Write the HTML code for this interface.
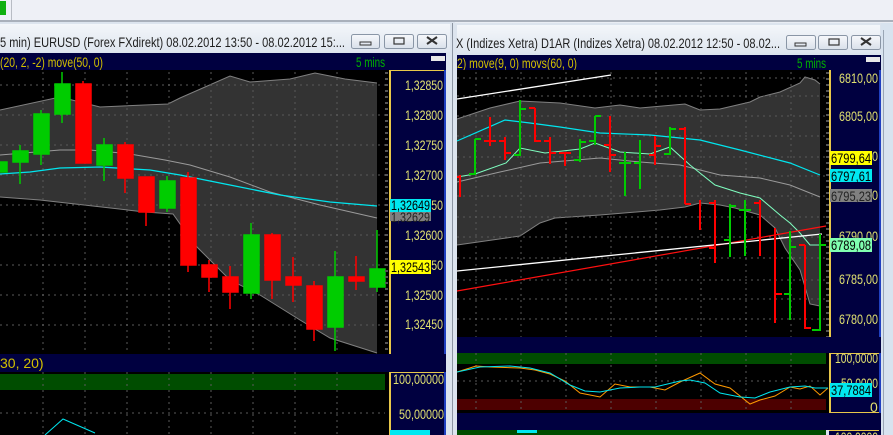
<!DOCTYPE html>
<html><head><meta charset="utf-8"><style>
html,body{margin:0;padding:0;width:893px;height:435px;overflow:hidden;background:#e9edf4}
svg{display:block}
text{font-family:"Liberation Sans",sans-serif}
</style></head><body>
<svg width="893" height="435" viewBox="0 0 893 435" xmlns="http://www.w3.org/2000/svg">
<defs>
<linearGradient id="tb" x1="0" y1="0" x2="0" y2="1"><stop offset="0" stop-color="#f3f6fa"/><stop offset="1" stop-color="#dfe6ef"/></linearGradient>
<linearGradient id="bt" x1="0" y1="0" x2="0" y2="1"><stop offset="0" stop-color="#f6f8fb"/><stop offset="1" stop-color="#d9e0ea"/></linearGradient>
<pattern id="dv" width="1" height="6" patternUnits="userSpaceOnUse"><rect width="1" height="2" fill="#555"/></pattern>
</defs>
<rect x="0" y="0" width="893" height="21" fill="#eef0f6"/>
<rect x="0" y="1" width="6" height="14" fill="#10b010"/>
<rect x="11" y="0" width="1" height="20" fill="#b8bcc4"/>
<rect x="0" y="20" width="893" height="2" fill="#a9b0bb"/>

<rect x="0" y="22" width="455" height="413" fill="#dce4ee"/>
<rect x="0" y="24" width="450" height="28" fill="url(#tb)"/>
<text x="0" y="47" font-size="14" fill="#1e1e1e" textLength="345" lengthAdjust="spacingAndGlyphs">5 min)  EURUSD (Forex FXdirekt) 08.02.2012 13:50 - 08.02.2012 15:...</text>
<g stroke="#8a96a6" fill="url(#bt)"><rect x="351.5" y="34.5" width="28" height="14" rx="2"/><rect x="384.5" y="34.5" width="29" height="14" rx="2"/><rect x="417.5" y="34.5" width="29" height="14" rx="2"/></g>
<rect x="360" y="42" width="11" height="3" fill="none" stroke="#333" stroke-width="1"/>
<rect x="394" y="38" width="10" height="6" fill="none" stroke="#333" stroke-width="1.2"/>
<path d="M427 37l10 7M437 37l-10 7" stroke="#333" stroke-width="2"/>
<rect x="0" y="53" width="446" height="17" fill="#000040"/>
<text x="0" y="67" font-size="14" fill="#d2c000" textLength="103" lengthAdjust="spacingAndGlyphs">(20, 2, -2) move(50, 0)</text>
<text x="356" y="67" font-size="13.5" fill="#00b000" textLength="29" lengthAdjust="spacingAndGlyphs">5 mins</text>
<rect x="431" y="56" width="14" height="5" fill="#e8e8e8"/>
<rect x="0" y="70" width="389" height="284" fill="#000"/>
<polygon fill="#333" points="0,110 60,97 100,107 168,104 180,98 230,76 250,82 290,79 315,73 345,79 377,83 377,353 330,338 300,320 260,295 230,280 195,245 173,214 145,212 40,200 0,197"/>
<polyline fill="none" stroke="#808080" points="0,110 60,97 100,107 168,104 180,98 230,76 250,82 290,79 315,73 345,79 377,83"/>
<polyline fill="none" stroke="#808080" points="0,197 40,200 145,212 173,214 195,245 230,280 260,295 300,320 330,338 377,353"/>
<g stroke="#5a5a5a" stroke-dasharray="2 4">
<path d="M43 72V354M85 72V354M127 72V354M169 72V354M211 72V354M253 72V354M295 72V354M337 72V354"/>
<path d="M0 85H385M0 115H385M0 145H385M0 175H385M0 205H385M0 235H385M0 265H385M0 295H385M0 325H385"/>
</g>
<polyline fill="none" stroke="#9a9a9a" points="0,155 60,150 90,150 130,154 165,160 190,165 230,177 270,192 320,205 377,218"/>
<polyline fill="none" stroke="#00e5ee" stroke-width="1.3" points="0,174 30,172 60,168 100,167 150,170 180,175 230,185 280,195 330,202 377,206"/>
<g stroke-width="1.5">
<g stroke="#00cc00" fill="#00cc00">
<path d="M20 145V184M41 110V165M62 72V123M104 138V181M167 176V212M251 223V299M335 251V351M377 230V292"/>
<rect x="0" y="162" width="7" height="10"/><rect x="13" y="151" width="15" height="11"/><rect x="34" y="114" width="15" height="40"/><rect x="55" y="84" width="15" height="30"/><rect x="97" y="145" width="15" height="20"/><rect x="160" y="181" width="15" height="27"/><rect x="244" y="235" width="15" height="58"/><rect x="328" y="277" width="15" height="50"/><rect x="370" y="269" width="15" height="18"/>
</g>
<g stroke="#ff0000" fill="#ff0000">
<path d="M83 81V163M125 142V193M146 177V226M188 172V272M209 260V292M230 266V309M272 233V299M293 257V302M314 281V341M356 256V290"/>
<rect x="76" y="84" width="15" height="79"/><rect x="118" y="145" width="15" height="33"/><rect x="139" y="177" width="15" height="35"/><rect x="181" y="178" width="15" height="87"/><rect x="202" y="265" width="15" height="12"/><rect x="223" y="277" width="15" height="15"/><rect x="265" y="235" width="15" height="45"/><rect x="286" y="277" width="15" height="8"/><rect x="307" y="286" width="15" height="43"/><rect x="349" y="277" width="15" height="4"/>
</g></g>
<rect x="389" y="70" width="57" height="284" fill="#000040"/>
<rect x="389" y="70" width="55" height="1" fill="#e8c84a"/>
<rect x="389" y="70" width="2" height="284" fill="#e8c84a"/>
<rect x="444" y="70" width="2" height="284" fill="#2040c0"/>
<rect x="385" y="70" width="3" height="284" fill="url(#dv)"/>
<g font-size="14" fill="#e0e070">
<text x="405" y="90" textLength="38" lengthAdjust="spacingAndGlyphs">1,32850</text><text x="405" y="120" textLength="38" lengthAdjust="spacingAndGlyphs">1,32800</text><text x="405" y="150" textLength="38" lengthAdjust="spacingAndGlyphs">1,32750</text><text x="405" y="180" textLength="38" lengthAdjust="spacingAndGlyphs">1,32700</text><text x="405" y="210" textLength="38" lengthAdjust="spacingAndGlyphs">1,32650</text><text x="405" y="240" textLength="38" lengthAdjust="spacingAndGlyphs">1,32600</text><text x="405" y="270" textLength="38" lengthAdjust="spacingAndGlyphs">1,32550</text><text x="405" y="300" textLength="38" lengthAdjust="spacingAndGlyphs">1,32500</text><text x="405" y="329" textLength="38" lengthAdjust="spacingAndGlyphs">1,32450</text>
</g>
<rect x="390" y="199" width="41" height="13" fill="#00e8f0"/><text x="391" y="210" font-size="14" fill="#000" textLength="39" lengthAdjust="spacingAndGlyphs">1,32649</text>
<rect x="390" y="212" width="41" height="9" fill="#808080"/><text x="391" y="222" font-size="14" fill="#222" textLength="39" lengthAdjust="spacingAndGlyphs">1,32629</text>
<rect x="390" y="260" width="41" height="14" fill="#ffff00"/><text x="391" y="272" font-size="14" fill="#000" textLength="39" lengthAdjust="spacingAndGlyphs">1,32543</text>
<rect x="0" y="354" width="446" height="18" fill="#000040"/>
<text x="0" y="368" font-size="14" fill="#d2c000">30, 20)</text>
<rect x="0" y="372" width="389" height="63" fill="#000"/>
<rect x="0" y="374" width="385" height="16" fill="#004d00"/>
<g stroke="#5a5a5a" stroke-dasharray="2 4"><path d="M43 372V435M85 372V435M127 372V435M169 372V435M211 372V435M253 372V435M295 372V435M337 372V435M0 413H385"/></g>
<polyline fill="none" stroke="#00e5ee" points="45,435 63,419 95,433"/>
<rect x="389" y="372" width="57" height="63" fill="#000040"/>
<rect x="389" y="372" width="2" height="63" fill="#e8c84a"/><rect x="389" y="372" width="55" height="1" fill="#e8c84a"/>
<rect x="444" y="372" width="2" height="63" fill="#2040c0"/>
<g font-size="14" fill="#e0e070"><text x="393" y="384" textLength="51" lengthAdjust="spacingAndGlyphs">100,00000</text><text x="399" y="419" textLength="45" lengthAdjust="spacingAndGlyphs">50,00000</text></g>
<rect x="390" y="430" width="40" height="5" fill="#00e8f0"/>

<rect x="451" y="23" width="442" height="412" fill="#dce4ee" rx="4"/>
<rect x="452" y="23" width="1" height="412" fill="#8d96a3"/>
<rect x="457" y="25" width="423" height="28" fill="url(#tb)"/>
<text x="456" y="48" font-size="14" fill="#1e1e1e" textLength="324" lengthAdjust="spacingAndGlyphs">X (Indizes Xetra) D1AR (Indizes Xetra) 08.02.2012 12:50 - 08.02...</text>
<g stroke="#8a96a6" fill="url(#bt)"><rect x="786.5" y="35.5" width="29" height="14" rx="2"/><rect x="818.5" y="35.5" width="29" height="14" rx="2"/><rect x="851.5" y="35.5" width="29" height="14" rx="2"/></g>
<rect x="795" y="43" width="11" height="3" fill="none" stroke="#333"/>
<rect x="829" y="39" width="10" height="6" fill="none" stroke="#333" stroke-width="1.2"/>
<path d="M861 38l10 7M871 38l-10 7" stroke="#333" stroke-width="2"/>
<rect x="457" y="55" width="424" height="15" fill="#000040"/>
<text x="457" y="68" font-size="14" fill="#d2c000" textLength="120" lengthAdjust="spacingAndGlyphs">2) move(9, 0) movs(60, 0)</text>
<text x="797" y="68" font-size="13.5" fill="#00b000" textLength="29" lengthAdjust="spacingAndGlyphs">5 mins</text>
<rect x="866" y="57" width="14" height="5" fill="#e8e8e8"/>
<rect x="457" y="70" width="373" height="267" fill="#000"/>
<polygon fill="#333" points="457,119 490,108 520,101 560,103 595,108 620,105 640,108 685,104 700,110 720,109 750,102 760,97 780,92 800,83 805,77 815,80 820,84 820,306 810,304 800,270 785,248 775,228 760,215 735,208 720,205 700,203 685,207 660,210 600,215 555,218 540,223 520,236 457,245"/>
<polyline fill="none" stroke="#808080" points="457,119 490,108 520,101 560,103 595,108 620,105 640,108 685,104 700,110 720,109 750,102 760,97 780,92 800,83 805,77 815,80 820,84"/>
<polyline fill="none" stroke="#808080" points="457,245 520,236 540,223 555,218 600,215 660,210 685,207 700,203 720,205 735,208 760,215 775,228 785,248 800,270 810,304 820,306"/>
<g stroke="#5a5a5a" stroke-dasharray="2 4">
<path d="M476 72V337M521 72V337M566 72V337M611 72V337M656 72V337M701 72V337M746 72V337M791 72V337"/>
<path d="M457 78H826M457 96H826M457 116H826M457 136H826M457 157H826M457 176H826M457 196H826M457 217H826M457 237H826M457 258H826M457 280H826M457 299H826M457 319H826"/>
</g>
<polyline fill="none" stroke="#9a9a9a" points="457,182 500,172 540,163 600,158 640,162 680,165 720,175 760,178 790,185 820,197"/>
<polyline fill="none" stroke="#00e5ee" stroke-width="1.2" points="457,141 505,120 530,123 560,127 600,133 650,135 700,140 740,150 790,163 820,175"/>
<polyline fill="none" stroke="#7fffc0" points="457,177 475,174 506,163 520,148 545,153 580,149 595,143 620,152 650,154 670,147 690,165 715,185 740,193 760,198 780,215 790,223 800,233 810,245 820,245"/>
<polyline fill="none" stroke="#fff" stroke-width="1.3" points="457,99 611,75"/>
<polyline fill="none" stroke="#ff1010" stroke-width="1.2" points="457,291 826,226"/>
<polyline fill="none" stroke="#fff" stroke-width="1.3" points="457,271 822,234"/>
<g stroke-width="2" fill="none">
<path stroke="#ff0000" d="M460 175V197M457 177H460M490 117V146M484 141H490M490 141H496M505 137V160M499 141H505M505 153H511M535 108V142M529 108H535M535 141H541M550 137V164M544 141H550M550 153H556M565 153V166M559 153H565M565 153H571M610 116V172M604 145H610M610 155H616M655 136V165M649 155H655M655 146H661M685 127V204M679 129H685M685 204H691M700 200V230M715 200V263M709 203H715M709 248H715M760 200V256M754 203H760M775 228V323M775 294H782M805 245V329M799 245H805M805 328H811"/>
<path stroke="#00cc00" d="M475 139V175M469 174H475M475 139H481M520 100V156M514 155H520M520 109H526M580 139V162M580 142H586M574 160H580M595 116V145M595 116H601M589 141H595M625 152V196M619 163H625M625 163H631M640 140V189M634 163H640M670 127V155M664 154H670M670 129H676M730 204V257M724 240H730M730 206H736M745 200V256M739 210H745M745 210H751M790 231V320M784 294H790M790 247H796M820 234V331M812 330H820M820 245H826"/>
</g>
<rect x="826" y="70" width="3" height="267" fill="url(#dv)"/>
<rect x="829" y="70" width="52" height="268" fill="#000040"/>
<rect x="829" y="70" width="2" height="268" fill="#e8c84a"/>
<rect x="829" y="337" width="50" height="1" fill="#e8c84a"/>
<rect x="879" y="70" width="2" height="268" fill="#2040c0"/>
<g font-size="14" fill="#e0e070">
<text x="839" y="83" textLength="39" lengthAdjust="spacingAndGlyphs">6810,00</text><text x="839" y="121" textLength="39" lengthAdjust="spacingAndGlyphs">6805,00</text><text x="839" y="161" textLength="39" lengthAdjust="spacingAndGlyphs">6800,00</text><text x="839" y="200" textLength="39" lengthAdjust="spacingAndGlyphs">6795,00</text><text x="839" y="241" textLength="39" lengthAdjust="spacingAndGlyphs">6790,00</text><text x="839" y="284" textLength="39" lengthAdjust="spacingAndGlyphs">6785,00</text><text x="839" y="324" textLength="39" lengthAdjust="spacingAndGlyphs">6780,00</text>
</g>
<rect x="830" y="151" width="42" height="14" fill="#ffff00"/><text x="831" y="163" font-size="14" fill="#000" textLength="40" lengthAdjust="spacingAndGlyphs">6799,64</text>
<rect x="830" y="169" width="42" height="13" fill="#00e8f0"/><text x="831" y="181" font-size="14" fill="#000" textLength="40" lengthAdjust="spacingAndGlyphs">6797,61</text>
<rect x="830" y="189" width="42" height="13" fill="#808080"/><text x="831" y="201" font-size="14" fill="#222" textLength="40" lengthAdjust="spacingAndGlyphs">6795,23</text>
<rect x="830" y="238" width="42" height="14" fill="#80ffb0"/><text x="831" y="250" font-size="14" fill="#000" textLength="40" lengthAdjust="spacingAndGlyphs">6789,08</text>
<rect x="457" y="337" width="424" height="16" fill="#000040"/>
<rect x="457" y="353" width="372" height="60" fill="#000"/>
<rect x="457" y="353" width="369" height="11" fill="#004d00"/>
<rect x="457" y="399" width="369" height="11" fill="#4d0000"/>
<g stroke="#5a5a5a" stroke-dasharray="2 4"><path d="M476 353V413M521 353V413M566 353V413M611 353V413M656 353V413M701 353V413M746 353V413M791 353V413M457 381H826"/></g>
<polyline fill="none" stroke="#ff9900" points="457,372 476,366 490,367 520,368 535,370 550,374 565,381 580,393 600,397 615,384 630,387 650,387 665,390 680,382 700,373 715,384 730,388 750,404 760,400 775,396 790,387 800,389 810,386 820,395 828,388"/>
<polyline fill="none" stroke="#00e5ee" points="457,372 480,367 510,366 530,368 550,373 570,385 585,391 600,392 620,388 640,387 655,387 680,381 690,380 705,383 720,393 740,397 755,398 770,392 790,387 805,386 815,388 828,388"/>
<rect x="829" y="353" width="52" height="60" fill="#000040"/>
<rect x="829" y="353" width="2" height="60" fill="#e8c84a"/><rect x="829" y="353" width="50" height="1" fill="#e8c84a"/><rect x="829" y="412" width="50" height="1" fill="#e8c84a"/>
<rect x="879" y="353" width="2" height="60" fill="#2040c0"/>
<g font-size="14" fill="#e0e070"><text x="835" y="363" textLength="43" lengthAdjust="spacingAndGlyphs">100,0000</text><text x="841" y="388" textLength="37" lengthAdjust="spacingAndGlyphs">50,0000</text><text x="870" y="412">0</text></g>
<rect x="830" y="383" width="42" height="14" fill="#00e8f0"/><text x="831" y="395" font-size="14" fill="#000" textLength="40" lengthAdjust="spacingAndGlyphs">37,7884</text>
<rect x="457" y="413" width="424" height="17" fill="#000040"/>
<rect x="457" y="430" width="369" height="5" fill="#004d00"/>
<rect x="517" y="430" width="20" height="3" fill="#00e8f0"/>
<rect x="829" y="430" width="52" height="5" fill="#000040"/>
<rect x="829" y="430" width="50" height="1" fill="#e8c84a"/>
<text x="835" y="442" font-size="14" fill="#e0e070" textLength="43" lengthAdjust="spacingAndGlyphs">100,0000</text>
<rect x="881" y="23" width="12" height="412" fill="#d8e3ef"/>
<rect x="883" y="30" width="1" height="405" fill="#9aa6b5"/>
</svg>
</body></html>
